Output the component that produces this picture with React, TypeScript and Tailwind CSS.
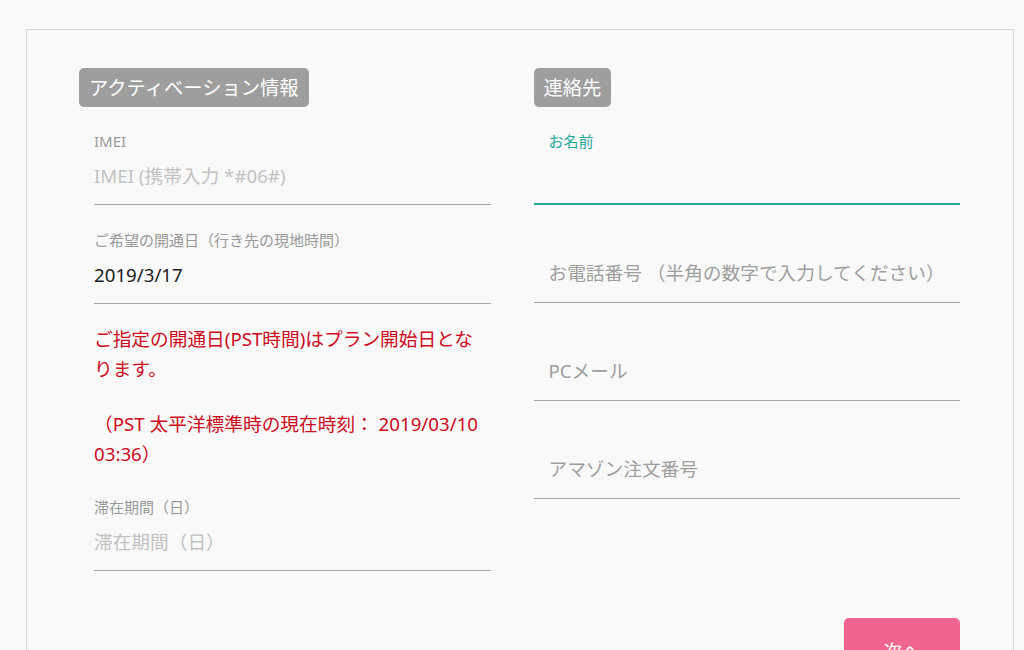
import type { ReactNode } from "react";

const FONT = {
  fontFamily: '"Noto Sans", "Noto Sans CJK JP", sans-serif',
};

export default function App() {
  return (
    <div style={FONT} className="min-h-[650px] overflow-hidden bg-[#f9f9f9] pt-[29px]">
      <div className="ml-[26px] w-[988px] border border-[#d4d4d4] bg-[#f9f9f9] pb-10 pl-[52px] pr-[53px] pt-[38px]">
        <div className="grid grid-cols-2 gap-[28px]">
          <ActivationColumn />
          <ContactColumn />
        </div>
        <div className="mt-[47px] flex justify-end">
          <button
            type="button"
            className="w-[116px] rounded-[5px] bg-[#f06490] py-5 text-[18.7px] leading-[26px] text-white"
          >
            次へ
          </button>
        </div>
      </div>
    </div>
  );
}

function Badge({ children }: { children: ReactNode }) {
  return (
    <div className="flex">
      <span className="rounded-[5px] bg-[#9e9e9e] px-[10px] py-[6px] text-[19.3px] leading-[27px] text-white">
        {children}
      </span>
    </div>
  );
}

function ActivationColumn() {
  return (
    <div>
      <Badge>アクティベーション情報</Badge>
      <div className="px-[15px]">
        <StackedField
          label="IMEI"
          placeholder="IMEI (携帯入力 *#06#)"
          className="pt-[24px]"
        />
        <StackedField
          label="ご希望の開通日（行き先の現地時間）"
          value="2019/3/17"
          className="pt-[25px]"
        />
        <div className="pt-[20px] text-[18.7px] leading-[29.5px] text-[#cc0a1c]">
          <p>ご指定の開通日(PST時間)はプラン開始日となります。</p>
          <p className="mt-[26px]">
            （PST 太平洋標準時の現在時刻： 2019/03/10 03:36）
          </p>
        </div>
        <StackedField
          label="滞在期間（日）"
          placeholder="滞在期間（日）"
          className="pt-[29px]"
        />
      </div>
    </div>
  );
}

interface StackedFieldProps {
  label: string;
  placeholder?: string;
  value?: string;
  className?: string;
}

function StackedField({ label, placeholder, value, className }: StackedFieldProps) {
  return (
    <div className={className}>
      <div className="border-b border-[#a8a8a8] pb-[14px]">
        <p className="text-[15px] leading-5 text-[#9a9a9a]">{label}</p>
        <p
          className={
            value
              ? "mt-[11px] text-[18.7px] leading-[28px] text-[#212121]"
              : "mt-[11px] text-[18.7px] leading-[28px] text-[#c2c2c2]"
          }
        >
          {value ?? placeholder}
        </p>
      </div>
    </div>
  );
}

function ContactColumn() {
  return (
    <div>
      <Badge>連絡先</Badge>
      <div className="h-[98px] border-b-2 border-[#26a69a] px-[15px] pt-[24px]">
        <p className="text-[15px] leading-5 text-[#26a69a]">お名前</p>
      </div>
      <FloatingField placeholder="お電話番号 （半角の数字で入力してください）" />
      <FloatingField placeholder="PCメール" />
      <FloatingField placeholder="アマゾン注文番号" />
    </div>
  );
}

function FloatingField({ placeholder }: { placeholder: string }) {
  return (
    <div className="flex h-[98px] flex-col justify-end border-b border-[#a8a8a8] px-[15px] pb-[15px]">
      <p className="whitespace-nowrap text-[18.7px] leading-[28px] text-[#9e9e9e]">
        {placeholder}
      </p>
    </div>
  );
}
